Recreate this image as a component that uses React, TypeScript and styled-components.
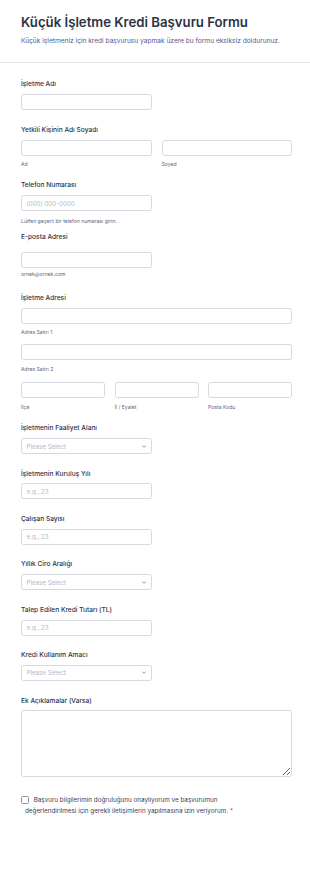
import React from "react";
import styled, { createGlobalStyle } from "styled-components";

const GlobalStyle = createGlobalStyle`
  html, body { margin: 0; padding: 0; background: #ffffff; }
  body { font-family: Inter, "Noto Sans", "Liberation Sans", sans-serif; color: #2c3345; }
  * { box-sizing: border-box; }
`;

const Page = styled.div`
  width: 310px;
  min-height: 892px;
  background: #ffffff;
`;

const Header = styled.header`
  padding: 14px 18px 17px 21px;
  border-bottom: 1px solid #e6e7ec;
`;

const Title = styled.h1`
  margin: 0;
  font-size: 13.2px;
  line-height: 17px;
  font-weight: 600;
  color: #2c3345;
`;

const Subtitle = styled.p`
  margin: 6px 0 0;
  font-size: 6.6px;
  line-height: 8px;
  color: #4a5c92;
`;

const Form = styled.form`
  padding: 16px 18px 0 21px;
`;

const Field = styled.div<{ $mb?: number }>`
  margin-bottom: ${(p) => p.$mb ?? 14.6}px;
`;

const Label = styled.label<{ $mb?: number }>`
  display: block;
  font-size: 6.6px;
  line-height: 10px;
  font-weight: 500;
  color: #2c3345;
  margin-bottom: ${(p) => p.$mb ?? 4.8}px;
`;

const Row = styled.div<{ $cols: number; $gap: number }>`
  display: grid;
  grid-template-columns: repeat(${(p) => p.$cols}, 1fr);
  column-gap: ${(p) => p.$gap}px;
`;

const Cell = styled.div<{ $mb?: number }>`
  margin-bottom: ${(p) => p.$mb ?? 0}px;
`;

const Input = styled.input<{ $half?: boolean }>`
  display: block;
  width: ${(p) => (p.$half ? "calc((100% - 10px) / 2)" : "100%")};
  height: 16px;
  padding: 0 4.5px;
  border: 1px solid #d6d9e2;
  border-radius: 2.5px;
  background: #ffffff;
  font-family: inherit;
  font-size: 6.2px;
  color: #2c3345;
  outline: none;
  &::placeholder { color: #b1b7c7; }
`;

const SelectWrap = styled.div`
  position: relative;
  width: calc((100% - 10px) / 2);
  height: 16px;
`;

const Select = styled.select`
  display: block;
  width: 100%;
  height: 16px;
  padding: 0 4.5px;
  border: 1px solid #d6d9e2;
  border-radius: 2.5px;
  background: #ffffff;
  font-family: inherit;
  font-size: 6.2px;
  color: #b1b7c7;
  appearance: none;
  -webkit-appearance: none;
  outline: none;
`;

const Chevron = styled.svg`
  position: absolute;
  right: 5.5px;
  top: 6.5px;
  width: 4px;
  height: 3px;
  pointer-events: none;
`;

const SubLabel = styled.div<{ $mt?: number }>`
  margin-top: ${(p) => p.$mt ?? 5}px;
  font-size: 5.1px;
  line-height: 6px;
  color: #5d6680;
`;

const TextArea = styled.textarea`
  display: block;
  width: 100%;
  height: 67px;
  padding: 4px 5px;
  border: 1px solid #d6d9e2;
  border-radius: 2.5px;
  font-family: inherit;
  font-size: 6.2px;
  outline: none;
`;

const Consent = styled.label`
  display: block;
  width: 242px;
  margin-top: 18px;
  padding-left: 4px;
  text-indent: -4px;
  font-size: 6.3px;
  line-height: 10.5px;
  color: #3a4058;
`;

const Box = styled.span`
  display: inline-block;
  width: 8px;
  height: 8px;
  margin-right: 4.7px;
  border: 1px solid #8d92a3;
  border-radius: 1.5px;
  vertical-align: -2px;
  text-indent: 0;
`;

const Req = styled.span`
  color: #f23a3c;
  margin-left: 2px;
`;

const SelectBox = ({ id }: { id: string }) => (
  <SelectWrap>
    <Select id={id} defaultValue="">
      <option value="">Please Select</option>
    </Select>
    <Chevron viewBox="0 0 8 5" fill="none">
      <path d="M1 1l3 3 3-3" stroke="#57647e" strokeWidth="1.4" strokeLinecap="round" strokeLinejoin="round" />
    </Chevron>
  </SelectWrap>
);

export default function App() {
  return (
    <Page>
      <GlobalStyle />
      <Header>
        <Title>Küçük İşletme Kredi Başvuru Formu</Title>
        <Subtitle>Küçük işletmeniz için kredi başvurusu yapmak üzere bu formu eksiksiz doldurunuz.</Subtitle>
      </Header>
      <Form onSubmit={(e) => e.preventDefault()}>
        <Field $mb={15.2}>
          <Label htmlFor="isletme">İşletme Adı</Label>
          <Input id="isletme" $half />
        </Field>

        <Field $mb={13.5}>
          <Label>Yetkili Kişinin Adı Soyadı</Label>
          <Row $cols={2} $gap={10}>
            <Cell>
              <Input />
              <SubLabel>Ad</SubLabel>
            </Cell>
            <Cell>
              <Input />
              <SubLabel>Soyad</SubLabel>
            </Cell>
          </Row>
        </Field>

        <Field $mb={8}>
          <Label htmlFor="tel">Telefon Numarası</Label>
          <Input id="tel" $half placeholder="(000) 000-0000" />
          <SubLabel $mt={6.6}>Lütfen geçerli bir telefon numarası girin.</SubLabel>
        </Field>

        <Field $mb={16}>
          <Label htmlFor="mail" $mb={10}>E-posta Adresi</Label>
          <Input id="mail" $half />
          <SubLabel $mt={3.6}>ornek@ornek.com</SubLabel>
        </Field>

        <Field $mb={13.6}>
          <Label>İşletme Adresi</Label>
          <Cell $mb={9.6}>
            <Input />
            <SubLabel $mt={4.6}>Adres Satırı 1</SubLabel>
          </Cell>
          <Cell $mb={9.7}>
            <Input />
            <SubLabel $mt={5.7}>Adres Satırı 2</SubLabel>
          </Cell>
          <Row $cols={3} $gap={9.5}>
            <Cell>
              <Input />
              <SubLabel $mt={6}>İlçe</SubLabel>
            </Cell>
            <Cell>
              <Input />
              <SubLabel $mt={6}>İl / Eyalet</SubLabel>
            </Cell>
            <Cell>
              <Input />
              <SubLabel $mt={6}>Posta Kodu</SubLabel>
            </Cell>
          </Row>
        </Field>

        <Field>
          <Label htmlFor="faaliyet">İşletmenin Faaliyet Alanı</Label>
          <SelectBox id="faaliyet" />
        </Field>

        <Field>
          <Label htmlFor="yil">İşletmenin Kuruluş Yılı</Label>
          <Input id="yil" $half placeholder="e.g., 23" />
        </Field>

        <Field>
          <Label htmlFor="calisan">Çalışan Sayısı</Label>
          <Input id="calisan" $half placeholder="e.g., 23" />
        </Field>

        <Field>
          <Label htmlFor="ciro">Yıllık Ciro Aralığı</Label>
          <SelectBox id="ciro" />
        </Field>

        <Field>
          <Label htmlFor="tutar">Talep Edilen Kredi Tutarı (TL)</Label>
          <Input id="tutar" $half placeholder="e.g., 23" />
        </Field>

        <Field>
          <Label htmlFor="amac">Kredi Kullanım Amacı</Label>
          <SelectBox id="amac" />
        </Field>

        <Field $mb={0}>
          <Label htmlFor="ek">Ek Açıklamalar (Varsa)</Label>
          <TextArea id="ek" />
        </Field>

        <Consent>
          <Box />
          Başvuru bilgilerimin doğruluğunu onaylıyorum ve başvurumun değerlendirilmesi için gerekli iletişimlerin yapılmasına izin veriyorum.
          <Req>*</Req>
        </Consent>
      </Form>
    </Page>
  );
}
